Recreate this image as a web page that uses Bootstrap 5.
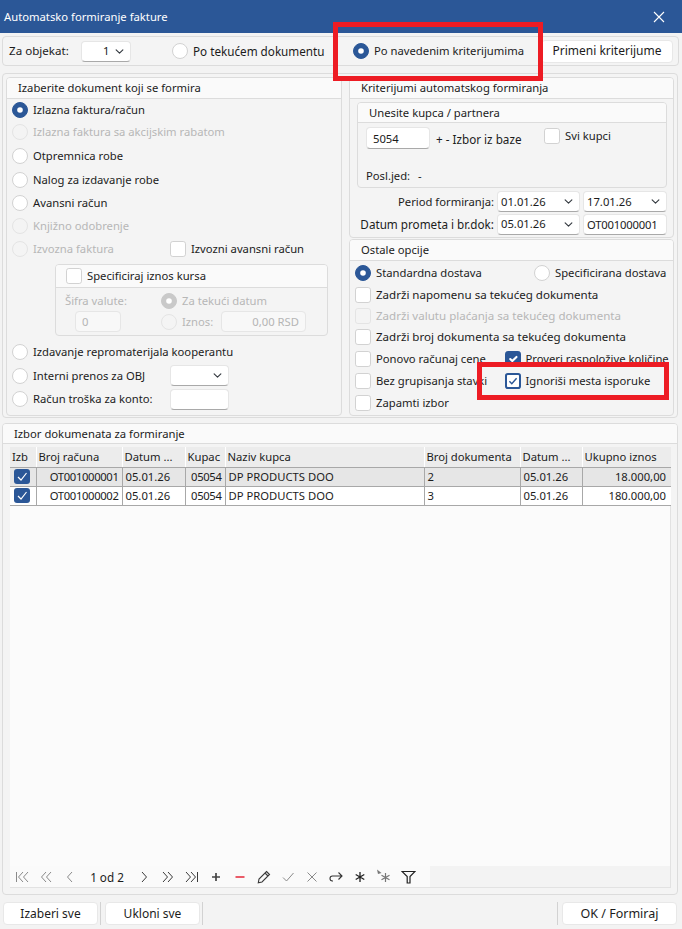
<!DOCTYPE html>
<html lang="sr">
<head>
<meta charset="utf-8">
<title>Automatsko formiranje fakture</title>
<link href="https://cdn.jsdelivr.net/npm/bootstrap@5.3.0/dist/css/bootstrap.min.css" rel="stylesheet">
<style>
html,body{margin:0;height:929px;overflow:hidden;background:#f3f3f3}
body{font-family:"Noto Sans","Open Sans",sans-serif;font-size:11.25px;line-height:16px;color:#1c1c1c;position:relative;width:682px}
.titlebar{height:33px;background:#2b5797;color:#fff;padding:0 17px 0 4px}
.toprow{margin:3px 3px 0 2px;height:30px;padding-left:6px;position:relative}
.pnl{border:1px solid #dcdcdc;border-radius:4px;background:#f4f4f4}
.pnl-h{height:21px;border-bottom:1px solid #dcdcdc;background:#fafafa;border-radius:3px 3px 0 0;display:flex;align-items:center;padding-left:11px}
.form-check-input{width:16px;height:16px;margin:0;flex:none;border:1px solid #d2d2d2;background-color:#fff}
.form-check-input:checked{background-color:#2b5797;border-color:#2b5797}
.form-check-input[type=radio]:checked{background-image:url("data:image/svg+xml,%3csvg xmlns='http://www.w3.org/2000/svg' viewBox='-8 -8 16 16'%3e%3ccircle r='3.2' fill='%23fff'/%3e%3c/svg%3e")}
.form-check-input:disabled{opacity:1;background-color:#f4f4f4;border-color:#e4e4e4}
.form-check-input:disabled:checked{background-color:#c9c9c9;border-color:#c9c9c9}
.form-check-input.focusbox:checked{background-color:#fff;border:2px solid #2b5797;background-image:url("data:image/svg+xml,%3csvg xmlns='http://www.w3.org/2000/svg' viewBox='0 0 20 20'%3e%3cpath fill='none' stroke='%232b5797' stroke-width='2.4' d='M4 10.500l4 4 8-9'/%3e%3c/svg%3e")}
.fld{height:21px;min-height:0;border:1px solid #e6e6e6;border-bottom-color:#a9a9a9;border-radius:4px;background-color:#fff;font-size:11.25px;line-height:16px;padding:1px 6px;color:#1c1c1c;box-shadow:none}
.fld:disabled{background-color:#f8f8f8;border-color:#e6e6e6;color:#b5b5b5;opacity:1}
select.fld{background-size:11px 9px;background-position:right 5px center;padding:1px 16px 1px 3px}
.opt{display:flex;align-items:center;gap:5px;white-space:nowrap}
.dis{color:#b7b7b7}
.wid{font-size:11.55px}
.lab-obj{width:60px;margin-right:12px;white-space:nowrap;font-size:11.6px}
select.sel-obj{width:50px;padding-left:21px}
.r-tek{margin-left:41px;width:181px;font-size:11.7px}
.r-nav{width:188px}
.topbtn{width:132px;height:22px}
.mainbox{margin:7px 4px 0 2px;height:345px;padding:3px 3px 1px 3px;gap:7px}
.leftp{width:336px;flex:none;height:339px}
.rightp{width:325px;flex:none}
.lst{padding:0 0 0 5px}
.h21{height:21px}.h22{height:22px}.h23{height:23px}.h25{height:25px}
.w-lab{width:158px}
.subgrp{margin:4px 0 4px 43px;width:273px;height:72px}
.subgrp .pnl-h{height:23px;padding-left:10px}
.subbody{display:grid;grid-template-columns:96px 1fr;padding:5px 0 0 9px}
.sifra{width:46px;margin:2px 0 0 10px}
.iznos-row{height:21px;margin-top:2px}
.iznos-lab{width:60px}
.iznos{width:85px}
.small-fld{width:59px}
.krit{height:161px}
.ostp{height:177px}
.wide-box{margin:3px 6px 0 7px;height:86px}
.wide-box .pnl-h{height:20px}
.kupbody{padding:4px 8px 0 8px}
.kup{width:64px;height:22px}
.baze{padding-top:4px;margin-left:6px;width:108px;white-space:nowrap;font-size:11.7px}
.svi{padding-top:1px;align-self:flex-start}
.posl{margin-top:19px;gap:8px}
.rlab{width:144px;text-align:right;white-space:nowrap;flex:none}
.dates{padding:3px 6px 0 0;gap:3px;height:24px;align-items:center}
.dates2{padding-top:0}
.dates2 .rlab{font-size:11.7px}
.dsel{width:83px;flex:none}
.dsel2{width:84px;flex:none}
.code{padding-left:3px;letter-spacing:-.2px}
.ost{padding:1px 0 0 5px;height:155px}
.w-std{width:179px}
.w-col{width:150px}
.ost .w-col{width:149.500px}
.gridbox{margin:5px 4px 0 2px;height:472px}
.gridbox>.pnl-h{height:20px}
.gridwrap{margin:3px 6px 0 7px;height:441px;border-right:1px solid #e2e2e2;border-bottom:1px solid #e2e2e2;background:#fbfbfb}
.gridarea{flex:1 1 auto;min-height:0;background:#fbfbfb}
.tb{table-layout:fixed;width:661px;margin:0;border-collapse:collapse;font-size:11.25px;--bs-table-bg:transparent}
.tb th,.tb td{padding:0 3px;height:19px;line-height:16px;vertical-align:middle;white-space:nowrap;overflow:hidden;border-width:0 1px 1px 0;border-style:solid;border-color:#a8a8a8;color:#1c1c1c;box-shadow:none}
.tb th{font-weight:400;background:#ececec;height:20px;border-right-color:#fff;padding-left:2px}
.tb td:last-child,.tb th:last-child{border-right:0;padding-right:5px}
.tb .rw1 td{background:#e6e6e6}
.tb .rw2 td{background:#fff}
.tb .ck{padding:0 0 0 4px}
.tb .tick{display:block;width:16px;height:15px}
.tb .num{letter-spacing:-.35px}
.c1{width:26px}.c2{width:86px}.c3{width:63px}.c4{width:40px}.c5{width:199px}.c6{width:96px}.c7{width:62px}.c8{width:89px}
.pager{height:21px;background:#f3f3f3;flex:none}
.pager-in{width:420px;height:21px;background:#fafafa;display:flex;align-items:center}
.ic{width:24px;height:21px;display:flex;align-items:center;justify-content:center;flex:none}
.pgtxt{width:50px;text-align:center;flex:none;font-size:11.7px}
.footrow{margin:7px 5px 0 3px;height:23px}
.fbtn{height:23px;border:1px solid #e8e8e8;border-radius:4px;background:#fff;font-size:12px;line-height:16px;padding:0;color:#1c1c1c;--bs-btn-hover-bg:#fff}
.fb1{width:95px}
.fb2{width:115px;font-size:12.500px}
.sep{width:1px;height:23px;background:#d2d2d2;margin:0 4px 0 2px}
.redmark{position:absolute;border:5px solid #ed1c24;pointer-events:none}
.rm1{left:333px;top:22px;width:210px;height:59px}
.rm2{left:477px;top:362px;width:192px;height:38px}
</style>
</head>
<body>
<div class="titlebar d-flex align-items-center justify-content-between">
  <span>Automatsko formiranje fakture</span>
  <svg width="12" height="12" viewBox="0 0 12 12"><path d="M1 1l10 10M11 1L1 11" stroke="#fff" stroke-width="1.1" fill="none"/></svg>
</div>

<div class="toprow pnl d-flex align-items-center">
  <span class="lab-obj">Za objekat:</span>
  <select class="form-select fld sel-obj"><option>1</option></select>
  <label class="opt r-tek"><input class="form-check-input" type="radio" name="a"><span>Po tekućem dokumentu</span></label>
  <label class="opt r-nav"><input class="form-check-input" type="radio" name="a" checked><span>Po navedenim kriterijumima</span></label>
  <button class="btn fbtn topbtn" type="button">Primeni kriterijume</button>
</div>

<div class="mainbox pnl d-flex">
  <div class="leftp pnl">
    <div class="pnl-h">Izaberite dokument koji se formira</div>
    <div class="lst">
      <label class="opt h22"><input class="form-check-input" type="radio" name="b" checked><span>Izlazna faktura/račun</span></label>
      <label class="opt h22 dis"><input class="form-check-input" type="radio" name="b" disabled><span>Izlazna faktura sa akcijskim rabatom</span></label>
      <label class="opt h25"><input class="form-check-input" type="radio" name="b"><span>Otpremnica robe</span></label>
      <label class="opt h23"><input class="form-check-input" type="radio" name="b"><span>Nalog za izdavanje robe</span></label>
      <label class="opt h23"><input class="form-check-input" type="radio" name="b"><span>Avansni račun</span></label>
      <label class="opt h23 dis"><input class="form-check-input" type="radio" name="b" disabled><span>Knjižno odobrenje</span></label>
      <div class="d-flex align-items-center h23">
        <label class="opt dis w-lab"><input class="form-check-input" type="radio" name="b" disabled><span>Izvozna faktura</span></label>
        <label class="opt"><input class="form-check-input" type="checkbox"><span>Izvozni avansni račun</span></label>
      </div>
      <div class="subgrp pnl">
        <div class="pnl-h"><label class="opt"><input class="form-check-input" type="checkbox"><span>Specificiraj iznos kursa</span></label></div>
        <div class="subbody">
          <div class="dis">Šifra valute:</div>
          <label class="opt dis"><input class="form-check-input" type="radio" name="c" checked disabled><span>Za tekući datum</span></label>
          <input class="form-control fld sifra" value="0" disabled>
          <div class="d-flex align-items-center iznos-row">
            <label class="opt dis iznos-lab"><input class="form-check-input" type="radio" name="c" disabled><span>Iznos:</span></label>
            <input class="form-control fld text-end iznos" value="0,00 RSD" disabled>
          </div>
        </div>
      </div>
      <label class="opt h23"><input class="form-check-input" type="radio" name="b"><span>Izdavanje repromaterijala kooperantu</span></label>
      <div class="d-flex align-items-center h25">
        <label class="opt w-lab"><input class="form-check-input" type="radio" name="b"><span>Interni prenos za OBJ</span></label>
        <select class="form-select fld small-fld"><option></option></select>
      </div>
      <div class="d-flex align-items-center h22">
        <label class="opt w-lab"><input class="form-check-input" type="radio" name="b"><span>Račun troška za konto:</span></label>
        <input class="form-control fld small-fld">
      </div>
    </div>
  </div>

  <div class="rightp d-flex flex-column">
    <div class="pnl krit">
      <div class="pnl-h">Kriterijumi automatskog formiranja</div>
      <div class="wide-box pnl">
        <div class="pnl-h">Unesite kupca / partnera</div>
        <div class="kupbody">
          <div class="d-flex">
            <input class="form-control fld kup" value="5054">
            <span class="baze">+ - Izbor iz baze</span>
            <label class="opt svi"><input class="form-check-input" type="checkbox"><span>Svi kupci</span></label>
          </div>
          <div class="d-flex posl"><span>Posl.jed:</span><span>-</span></div>
        </div>
      </div>
      <div class="d-flex dates"><span class="rlab">Period formiranja:</span><select class="form-select fld dsel"><option>01.01.26</option></select><select class="form-select fld dsel2"><option>17.01.26</option></select></div>
      <div class="d-flex dates dates2"><span class="rlab">Datum prometa i br.dok:</span><select class="form-select fld dsel"><option>05.01.26</option></select><input class="form-control fld dsel2 code" value="OT001000001"></div>
    </div>
    <div class="pnl mt-auto ostp">
      <div class="pnl-h">Ostale opcije</div>
      <div class="ost">
        <div class="d-flex align-items-center h22">
          <label class="opt w-std"><input class="form-check-input" type="radio" name="d" checked><span>Standardna dostava</span></label>
          <label class="opt"><input class="form-check-input" type="radio" name="d"><span>Specificirana dostava</span></label>
        </div>
        <label class="opt h21 wid"><input class="form-check-input" type="checkbox"><span>Zadrži napomenu sa tekućeg dokumenta</span></label>
        <label class="opt h21 dis wid"><input class="form-check-input" type="checkbox" disabled><span>Zadrži valutu plaćanja sa tekućeg dokumenta</span></label>
        <label class="opt h22 wid"><input class="form-check-input" type="checkbox"><span>Zadrži broj dokumenta sa tekućeg dokumenta</span></label>
        <div class="d-flex align-items-center h22">
          <label class="opt w-col"><input class="form-check-input" type="checkbox"><span>Ponovo računaj cene</span></label>
          <label class="opt"><input class="form-check-input" type="checkbox" checked><span>Proveri raspoložive količine</span></label>
        </div>
        <div class="d-flex align-items-center h22">
          <label class="opt w-col"><input class="form-check-input" type="checkbox"><span>Bez grupisanja stavki</span></label>
          <label class="opt"><input class="form-check-input focusbox" type="checkbox" checked><span>Ignoriši mesta isporuke</span></label>
        </div>
        <label class="opt h21"><input class="form-check-input" type="checkbox"><span>Zapamti izbor</span></label>
      </div>
    </div>
  </div>
</div>

<div class="gridbox pnl">
  <div class="pnl-h">Izbor dokumenata za formiranje</div>
  <div class="gridwrap d-flex flex-column">
    <div class="gridarea">
      <table class="table tb">
        <colgroup><col class="c1"><col class="c2"><col class="c3"><col class="c4"><col class="c5"><col class="c6"><col class="c7"><col class="c8"></colgroup>
        <thead><tr><th>Izb</th><th>Broj računa</th><th>Datum ...</th><th>Kupac</th><th>Naziv kupca</th><th>Broj dokumenta</th><th>Datum ...</th><th>Ukupno iznos</th></tr></thead>
        <tbody>
          <tr class="rw1"><td class="ck"><svg class="tick" viewBox="0 0 16 15"><rect width="16" height="15" rx="3" fill="#2b5797"/><path d="M4 8l3 3 5.500-7" fill="none" stroke="#fff" stroke-width="1.2"/></svg></td><td class="text-end num">OT001000001</td><td>05.01.26</td><td class="text-end num">05054</td><td>DP PRODUCTS DOO</td><td>2</td><td>05.01.26</td><td class="text-end">18.000,00</td></tr>
          <tr class="rw2"><td class="ck"><svg class="tick" viewBox="0 0 16 15"><rect width="16" height="15" rx="3" fill="#2b5797"/><path d="M4 8l3 3 5.500-7" fill="none" stroke="#fff" stroke-width="1.2"/></svg></td><td class="text-end num">OT001000002</td><td>05.01.26</td><td class="text-end num">05054</td><td>DP PRODUCTS DOO</td><td>3</td><td>05.01.26</td><td class="text-end">180.000,00</td></tr>
        </tbody>
      </table>
    </div>
    <div class="pager">
      <div class="pager-in">
        <span class="ic"><svg width="14" height="14" viewBox="0 0 14 14" fill="none" stroke="#8a8a8a"><path d="M1.500 2v10M8 2L3.500 7 8 12M13 2L8.500 7 13 12"/></svg></span>
        <span class="ic"><svg width="14" height="14" viewBox="0 0 14 14" fill="none" stroke="#8a8a8a"><path d="M7 2L2.500 7 7 12M12 2L7.500 7 12 12"/></svg></span>
        <span class="ic"><svg width="14" height="14" viewBox="0 0 14 14" fill="none" stroke="#8a8a8a"><path d="M9 2L4.500 7 9 12"/></svg></span>
        <span class="pgtxt">1 od 2</span>
        <span class="ic"><svg width="14" height="14" viewBox="0 0 14 14" fill="none" stroke="#3a3a3a"><path d="M5 2l4.500 5L5 12"/></svg></span>
        <span class="ic"><svg width="14" height="14" viewBox="0 0 14 14" fill="none" stroke="#3a3a3a"><path d="M2 2l4.500 5L2 12M7 2l4.500 5L7 12"/></svg></span>
        <span class="ic"><svg width="14" height="14" viewBox="0 0 14 14" fill="none" stroke="#3a3a3a"><path d="M1 2l4.500 5L1 12M6 2l4.500 5L6 12M12.500 2v10"/></svg></span>
        <span class="ic"><svg width="12" height="12" viewBox="0 0 12 12" fill="none" stroke="#444" stroke-width="1.7"><path d="M6 2v8M2 6h8"/></svg></span>
        <span class="ic"><svg width="12" height="12" viewBox="0 0 12 12" fill="none" stroke="#ea5b68" stroke-width="2"><path d="M1.500 6h9"/></svg></span>
        <span class="ic"><svg width="14" height="14" viewBox="0 0 14 14" fill="none" stroke="#3a3a3a" stroke-width="1.1"><path d="M9.500 1.500l3 3-7.500 7.500-3.700.8.700-3.800zM8 3l3 3"/></svg></span>
        <span class="ic"><svg width="14" height="14" viewBox="0 0 14 14" fill="none" stroke="#8a8a8a"><path d="M2 7.500l3.500 3.500 7-8"/></svg></span>
        <span class="ic"><svg width="14" height="14" viewBox="0 0 14 14" fill="none" stroke="#8a8a8a"><path d="M2.500 2.500l9 9M11.500 2.500l-9 9"/></svg></span>
        <span class="ic"><svg width="14" height="14" viewBox="0 0 14 14" fill="none" stroke="#333" stroke-width="1.1"><path d="M4 11H3.500C2 11 1 10 1 8.500S2 6 3.500 6H13M9.500 2.500L13 6 9.500 9.500"/></svg></span>
        <span class="ic"><svg width="10" height="10" viewBox="0 0 10 10" fill="none" stroke="#222" stroke-width="1.3"><path d="M5 0v10M.7 2.500l8.600 5M9.300 2.500l-8.600 5"/></svg></span>
        <span class="ic"><svg width="16" height="16" viewBox="0 0 16 16" fill="none" stroke="#777" stroke-width="1.2"><path d="M9.500 4v9M5.500 6.200l8 4.600M13.500 6.200l-8 4.600"/><path d="M1 .5l4.500 3.500L2 5z" fill="#777" stroke="none"/></svg></span>
        <span class="ic"><svg width="15" height="14" viewBox="0 0 15 14" fill="none" stroke="#222" stroke-width="1.2"><path d="M1 1.500h13L9 6.500V13H6.200V6.500z"/></svg></span>
      </div>
    </div>
  </div>
</div>

<div class="footrow d-flex align-items-center">
  <button class="btn fbtn fb1" type="button">Izaberi sve</button>
  <span class="sep"></span>
  <button class="btn fbtn fb1" type="button">Ukloni sve</button>
  <span class="sep"></span>
  <span class="sep ms-auto"></span>
  <button class="btn fbtn fb2" type="button">OK / Formiraj</button>
</div>

<div class="redmark rm1"></div>
<div class="redmark rm2"></div>
<script src="https://cdn.jsdelivr.net/npm/bootstrap@5.3.0/dist/js/bootstrap.bundle.min.js"></script>
</body>
</html>
